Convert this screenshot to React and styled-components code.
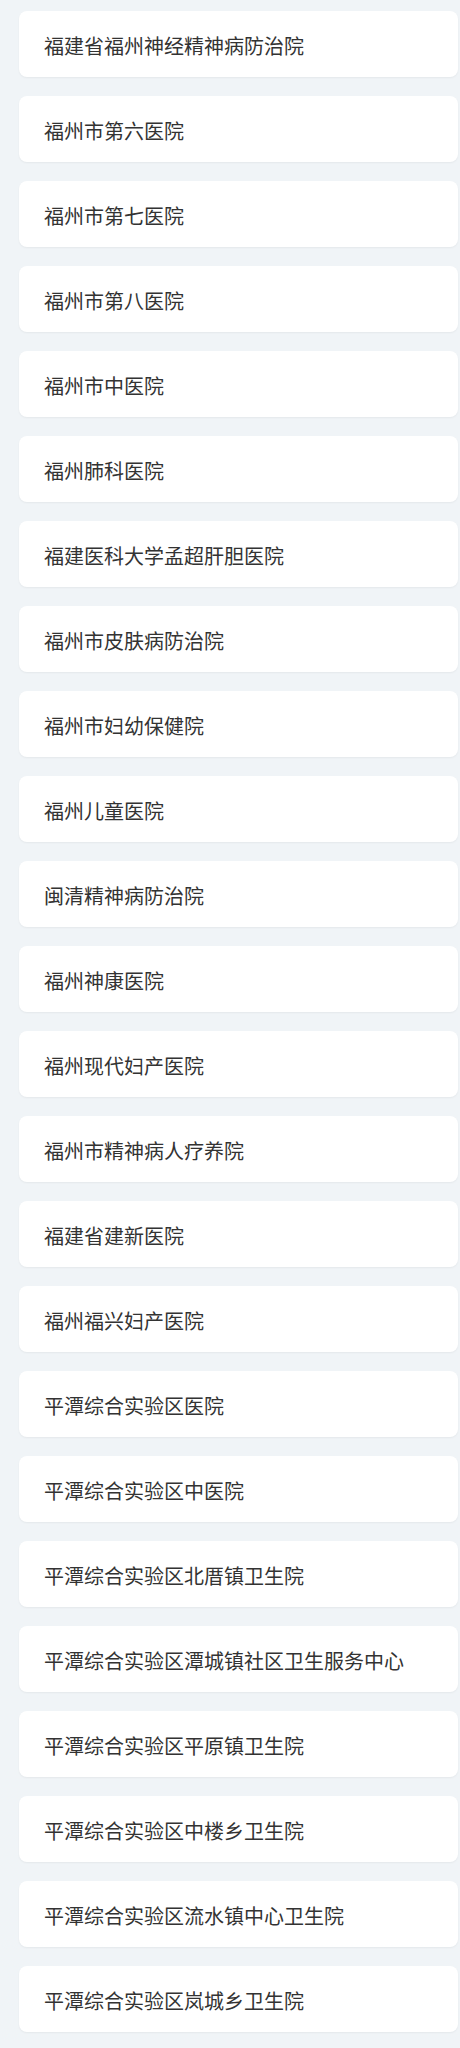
import React from "react";
import styled, { createGlobalStyle } from "styled-components";

const Global = createGlobalStyle`
  html, body { margin: 0; padding: 0; background: #f0f4f7; }
  body { font-family: "Noto Sans CJK SC", "Noto Sans", sans-serif; }
`;

const List = styled.div`
  display: flex;
  flex-direction: column;
  gap: 19px;
  padding: 11px 2px 16px 19px;
`;

const Card = styled.div`
  height: 66px;
  box-sizing: border-box;
  display: flex;
  align-items: center;
  padding: 2px 25px 0;
  background: #ffffff;
  border-radius: 8px;
  box-shadow: 0 1px 2px rgba(0, 0, 0, 0.05);
  color: #333333;
  font-size: 20px;
  font-weight: 400;
`;

const names = [
  "福建省福州神经精神病防治院",
  "福州市第六医院",
  "福州市第七医院",
  "福州市第八医院",
  "福州市中医院",
  "福州肺科医院",
  "福建医科大学孟超肝胆医院",
  "福州市皮肤病防治院",
  "福州市妇幼保健院",
  "福州儿童医院",
  "闽清精神病防治院",
  "福州神康医院",
  "福州现代妇产医院",
  "福州市精神病人疗养院",
  "福建省建新医院",
  "福州福兴妇产医院",
  "平潭综合实验区医院",
  "平潭综合实验区中医院",
  "平潭综合实验区北厝镇卫生院",
  "平潭综合实验区潭城镇社区卫生服务中心",
  "平潭综合实验区平原镇卫生院",
  "平潭综合实验区中楼乡卫生院",
  "平潭综合实验区流水镇中心卫生院",
  "平潭综合实验区岚城乡卫生院",
];

export default function App() {
  return (
    <>
      <Global />
      <List>
        {names.map((n) => (
          <Card key={n}>{n}</Card>
        ))}
      </List>
    </>
  );
}
